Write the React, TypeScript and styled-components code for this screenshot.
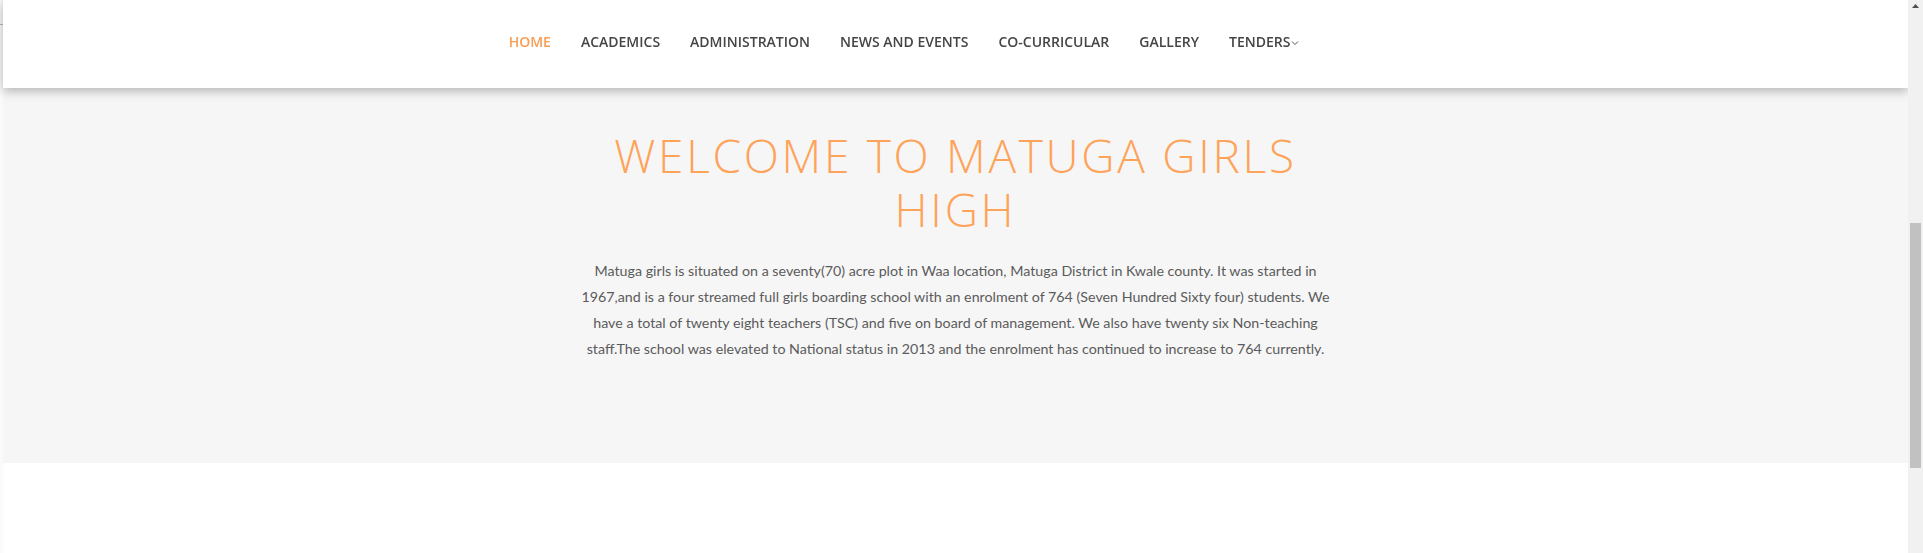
import React, { useLayoutEffect, useRef } from "react";
import styled, { createGlobalStyle } from "styled-components";

const GlobalStyle = createGlobalStyle`
  html, body {
    margin: 0;
    padding: 0;
    overflow: hidden;
    background: #f9f9f9;
  }
  * { box-sizing: border-box; }
`;

const Shell = styled.div`
  display: flex;
  height: 100vh;
`;

const Viewport = styled.div`
  flex: 1;
  min-width: 0;
  overflow: hidden;
  padding-left: 3px;
  background: linear-gradient(
    to bottom,
    #f8f8f8 0,
    #f8f8f8 24px,
    #b9b9b9 24px,
    #b9b9b9 25px,
    #fafafa 25px
  );
`;

const Rail = styled.div`
  width: 15px;
  flex: none;
  background: #f1f1f1;
  display: flex;
  flex-direction: column;
  align-items: center;
  padding-top: 4px;
`;

const RailArrow = styled.svg`
  width: 7px;
  height: 4px;
  display: block;
`;

const Thumb = styled.div`
  width: 11px;
  height: 245px;
  margin-top: 215px;
  background: #c1c1c1;
`;

const NavBar = styled.header`
  position: sticky;
  top: 0;
  z-index: 10;
  height: 88px;
  background: #ffffff;
  box-shadow: 0 3px 10px rgba(0, 0, 0, 0.28);
  display: flex;
  align-items: center;
  justify-content: center;
  padding-right: 103px;
  padding-bottom: 4px;
`;

const Menu = styled.ul`
  display: flex;
  align-items: center;
  list-style: none;
  margin: 0;
  padding: 0;
`;

const MenuLink = styled.a<{ $active?: boolean }>`
  display: flex;
  align-items: center;
  padding: 0 15px;
  font-family: "Open Sans", "Liberation Sans", sans-serif;
  font-weight: 600;
  font-size: 14px;
  line-height: 20px;
  text-transform: uppercase;
  text-decoration: none;
  color: ${(p) => (p.$active ? "#f99d53" : "#454545")};
  cursor: pointer;
`;

const Chevron = styled.svg`
  width: 8px;
  height: 8px;
  margin-left: 1px;
  margin-top: 1px;
`;

const Hero = styled.section`
  height: 469px;
  background: #e9e9e9;
`;

const Welcome = styled.section`
  background: #f6f6f6;
  height: 375px;
  padding-top: 40px;
`;

const Container = styled.div`
  width: 756px;
  margin: 0 auto;
  text-align: center;
`;

const Title = styled.h1`
  margin: 0;
  font-family: "Open Sans", "Liberation Sans", sans-serif;
  font-weight: 350;
  font-size: 46px;
  line-height: 54px;
  letter-spacing: 2.7px;
  color: #fea35a;
  text-transform: uppercase;
`;

const Intro = styled.p`
  margin: 22px 0 0;
  font-family: Lato, "Liberation Sans", sans-serif;
  font-size: 14.25px;
  line-height: 26px;
  color: #5b5b5b;
`;

const Below = styled.section`
  height: 320px;
  background: #ffffff;
`;

const items = [
  "Home",
  "Academics",
  "Administration",
  "News and Events",
  "Co-Curricular",
  "Gallery",
];

export default function App() {
  const ref = useRef<HTMLDivElement>(null);
  useLayoutEffect(() => {
    if (ref.current) ref.current.scrollTop = 469;
  }, []);
  return (
    <>
      <GlobalStyle />
      <Shell>
        <Viewport ref={ref}>
          <NavBar>
            <Menu>
              {items.map((t, i) => (
                <li key={t}>
                  <MenuLink $active={i === 0}>{t}</MenuLink>
                </li>
              ))}
              <li>
                <MenuLink>
                  Tenders
                  <Chevron viewBox="0 0 8 8" fill="none">
                    <path d="M1 2.5 L4 5.5 L7 2.5" stroke="#555" strokeWidth="1" />
                  </Chevron>
                </MenuLink>
              </li>
            </Menu>
          </NavBar>
          <Hero />
          <Welcome>
            <Container>
              <Title>Welcome to Matuga Girls High</Title>
              <Intro>
                Matuga girls is situated on a seventy(70) acre plot in Waa location, Matuga
                District in Kwale county. It was started in 1967,and is a four streamed full
                girls boarding school with an enrolment of 764 (Seven Hundred Sixty four)
                students. We have a total of twenty eight teachers (TSC) and five on board of
                management. We also have twenty six Non-teaching staff.The school was elevated
                to National status in 2013 and the enrolment has continued to increase to 764
                currently.
              </Intro>
            </Container>
          </Welcome>
          <Below />
        </Viewport>
        <Rail>
          <RailArrow viewBox="0 0 7 4">
            <path d="M3.5 0 L7 4 L0 4 Z" fill="#505050" />
          </RailArrow>
          <Thumb />
        </Rail>
      </Shell>
    </>
  );
}
